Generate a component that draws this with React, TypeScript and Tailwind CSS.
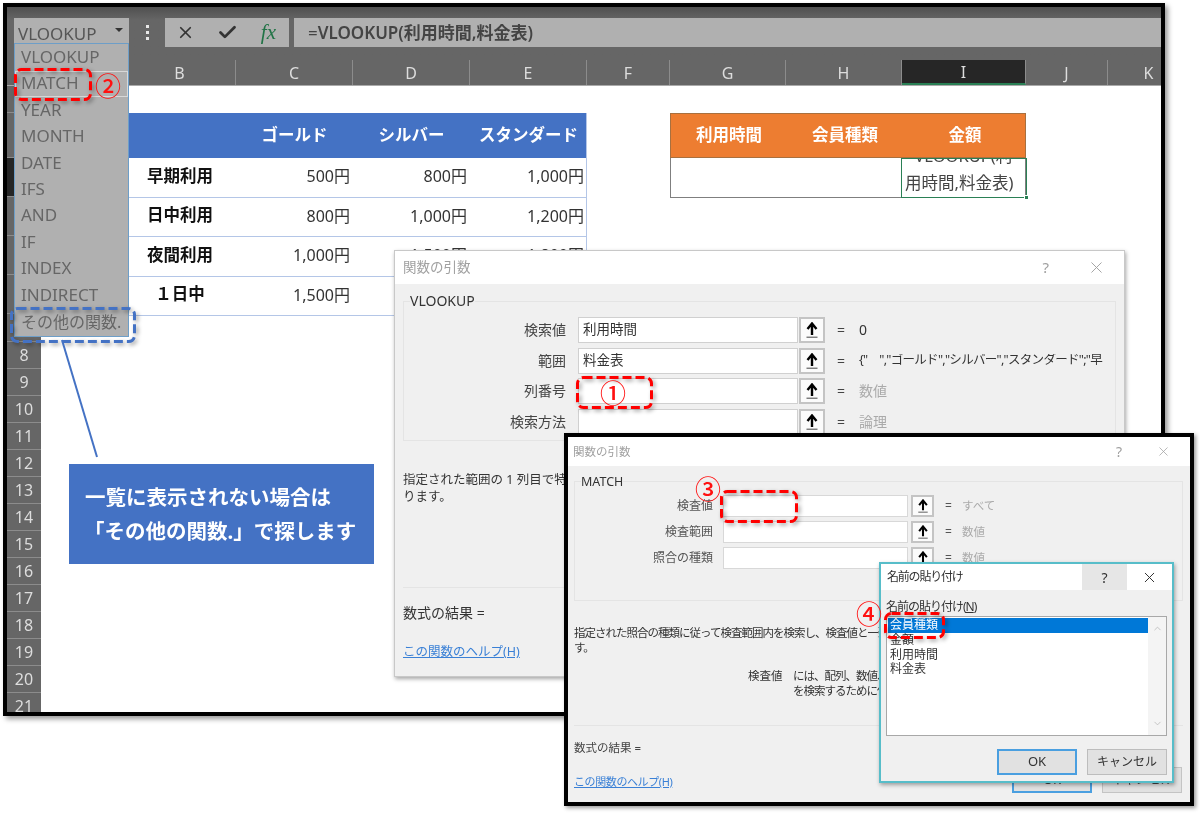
import { Check, ChevronDown, ChevronUp, X } from 'lucide-react'

const colHeaders = [
  { name: 'A', width: 'w-[83px]', active: false },
  { name: 'B', width: 'w-[112px]', active: false },
  { name: 'C', width: 'w-[117px]', active: false },
  { name: 'D', width: 'w-[117px]', active: false },
  { name: 'E', width: 'w-[117px]', active: false },
  { name: 'F', width: 'w-[83px]', active: false },
  { name: 'G', width: 'w-[116px]', active: false },
  { name: 'H', width: 'w-[116px]', active: false },
  { name: 'I', width: 'w-[124px]', active: true },
  { name: 'J', width: 'w-[82px]', active: false },
  { name: 'K', width: 'w-[82px]', active: false },
]

const rowHeaders = [
  { name: '1', height: 'h-[27px]', active: false },
  { name: '2', height: 'h-[45px]', active: false },
  { name: '3', height: 'h-[39px]', active: true },
  { name: '4', height: 'h-[39px]', active: false },
  { name: '5', height: 'h-[39px]', active: false },
  { name: '6', height: 'h-[39px]', active: false },
  { name: '7', height: 'h-[28px]', active: false },
  ...['8', '9', '10', '11', '12', '13', '14', '15', '16', '17', '18', '19', '20', '21'].map(name => ({ name, height: 'h-[27px]', active: false })),
]

const priceRows = [
  ['早期利用', '500円', '800円', '1,000円'],
  ['日中利用', '800円', '1,000円', '1,200円'],
  ['夜間利用', '1,000円', '1,500円', '1,800円'],
  ['１日中', '1,500円', '1,800円', '2,000円'],
]

const functionNames = ['VLOOKUP', 'MATCH', 'YEAR', 'MONTH', 'DATE', 'IFS', 'AND', 'IF', 'INDEX', 'INDIRECT']

const RefButton = ({ small }: { small?: boolean }) => (
  <div className={`${small ? 'w-[23px] h-[22px] ml-[3px]' : 'w-[26px] h-[26px] ml-[1px]'} bg-[#fbfbfb] border-2 border-[#c4c4c4] flex items-center justify-center shrink-0`}>
    <svg viewBox="0 0 14 16" className={small ? 'w-[12px] h-[14px]' : 'w-[14px] h-[16px]'}>
      <path d="M7 13V2M2.5 7 7 1.5 11.5 7" fill="none" stroke="#000" strokeWidth="2.4" />
      <path d="M1.5 15.2h11" stroke="#555" strokeWidth="1.1" />
    </svg>
  </div>
)

const ArgRow = ({ label, value, result, muted, long }: { label: string, value?: string, result: string, muted?: boolean, long?: boolean }) => (
  <div className="flex items-center h-[26px] text-[14px] leading-none">
    <div className="w-[162px] text-right text-[#444] shrink-0">{label}</div>
    <div className="ml-[12px] w-[220px] h-[26px] bg-white border border-[#d0d0d0] flex items-center px-[4px] text-[13.5px] text-[#333] shrink-0">{value}</div>
    <RefButton />
    <div className="ml-[12px] w-[22px] text-[#444] shrink-0">=</div>
    <div className={`whitespace-nowrap overflow-hidden w-[246px] ${muted ? 'text-[#aaa]' : 'text-[#333]'} ${long ? 'text-[12.5px] tracking-[-0.7px]' : ''}`}>{result}</div>
  </div>
)

const MatchRow = ({ label, result }: { label: string, result: string }) => (
  <div className="flex items-center h-[22px] text-[12px] leading-none">
    <div className="w-[138px] text-right text-[#555] shrink-0">{label}</div>
    <div className="ml-[10px] w-[185px] h-[22px] bg-white border border-[#d8d8d8] shrink-0" />
    <RefButton small />
    <div className="ml-[11px] w-[17px] text-[#555] shrink-0">=</div>
    <div className="text-[#aaa] text-[11.5px]">{result}</div>
  </div>
)

const Dashed = ({ className, w, h, color }: { className: string, w: number, h: number, color: string }) => (
  <svg width={w} height={h} className={`absolute drop-shadow-[2px_2px_2px_rgba(0,0,0,0.4)] ${className}`}>
    <rect x="1.5" y="1.5" width={w - 3} height={h - 3} rx="6" fill="none" stroke={color} strokeWidth="3" strokeDasharray="9 4" />
  </svg>
)

const Circled = ({ children, className }: { children: string, className: string }) => (
  <div className={`absolute text-[26px] leading-none font-medium text-[#ff1010] ${className}`}>{children}</div>
)

const App = () => {
  return (
    <div className="relative w-[1200px] h-[813px] bg-white overflow-hidden font-['Noto_Sans','Noto_Sans_CJK_JP',sans-serif] blur-[0.3px]">

      {/* excel window */}
      <div className="ml-[3px] mt-[3px] w-[1162px] h-[713px] border-4 border-black overflow-hidden flex flex-col bg-white shadow-[3px_3px_5px_rgba(0,0,0,0.4)]">
        <div className="h-[53px] bg-[#666] flex items-start pt-[11px] pl-[7px] shrink-0 bg-gradient-to-b from-[#505050] to-[#666] to-[25%]">
          <div className="w-[115px] h-[25px] bg-[#b0b0b0] flex items-center justify-between pl-[4px] pr-[6px] text-[17px] text-[#555] shrink-0">
            <span className="mt-[6px]">VLOOKUP</span>
            <div className="w-0 h-0 border-x-[4px] border-x-transparent border-t-[4px] border-t-[#333] mb-[2px]" />
          </div>
          <div className="w-[36px] flex flex-col items-center gap-[3px] pt-[7px] shrink-0">
            <div className="w-[3px] h-[3px] bg-[#e8e8e8]" />
            <div className="w-[3px] h-[3px] bg-[#e8e8e8]" />
            <div className="w-[3px] h-[3px] bg-[#e8e8e8]" />
          </div>
          <div className="w-[124px] h-[29px] bg-[#b0b0b0] flex items-center justify-between pl-[11px] pr-[13px] shrink-0">
            <X size={19} strokeWidth={2.2} className="text-[#333]" />
            <Check size={21} strokeWidth={3.2} className="text-[#333]" />
            <span className="font-['Liberation_Serif',serif] italic text-[21px] text-[#217346]">fx</span>
          </div>
          <div className="ml-[5px] flex-1 h-[29px] bg-[#b0b0b0] flex items-center pl-[14px] text-[17px] text-[#444] font-semibold">
            <span className="font-normal">=</span>VLOOKUP(利用時間,料金表)
          </div>
        </div>

        <div className="h-[26px] bg-[#666] flex pl-[34px] border-b border-[#aaa] shrink-0">
          {colHeaders.map(col => (
            <div key={col.name} className={`${col.width} shrink-0 flex items-center justify-center text-[16px] text-[#ddd] border-r border-[#8c8c8c] ${col.active ? 'bg-[#262626] border-b-2 border-b-[#2a8055]' : ''}`}>{col.name}</div>
          ))}
        </div>

        <div className="flex-1 flex min-h-0">
          <div className="w-[34px] bg-[#666] shrink-0">
            {rowHeaders.map(row => (
              <div key={row.name} className={`${row.height} flex items-center justify-center text-[16px] text-[#ddd] border-b border-[#8c8c8c] ${row.active ? 'bg-[#262626]' : ''}`}>{row.name}</div>
            ))}
          </div>

          <div className="flex-1 flex items-start pt-[27px] pl-[83px]">
            <div className="w-[463px] shrink-0 border-r border-[#b4c6e7]">
              <div className="grid grid-cols-[112px_117px_117px_117px] h-[45px] bg-[#4472c4] text-white font-bold text-[16.5px] items-center text-center">
                <div />
                <div>ゴールド</div>
                <div>シルバー</div>
                <div>スタンダード</div>
              </div>
              {priceRows.map(row => (
                <div key={row[0]} className="grid grid-cols-[112px_117px_117px_117px] h-[39.5px] pb-[2px] border-b border-[#b4c6e7] items-center text-[16px] text-[#333]">
                  <div className="text-center font-bold text-[16.5px] text-[#111]">{row[0]}</div>
                  <div className="text-right pr-[3px]">{row[1]}</div>
                  <div className="text-right pr-[3px]">{row[2]}</div>
                  <div className="text-right pr-[3px]">{row[3]}</div>
                </div>
              ))}
            </div>

            <div className="ml-[83px] w-[356px] shrink-0">
              <div className="grid grid-cols-[116px_116px_124px] h-[45px] bg-[#ed7d31] border border-[#a8703f] text-white font-bold text-[16.5px] items-center text-center">
                <div>利用時間</div>
                <div>会員種類</div>
                <div>金額</div>
              </div>
              <div className="flex h-[40px] border-x border-b border-[#7f7f7f] bg-white">
                <div className="w-[230px]" />
                <div className="relative flex-1 -mr-[2px] -mb-[1px] border-[1.5px] border-[#2a8055] overflow-hidden flex flex-col justify-end text-[16.5px] leading-[27px] text-[#444] px-[3px] pb-[1px]">
                  <div className="whitespace-nowrap">=VLOOKUP(利</div>
                  <div className="whitespace-nowrap">用時間,料金表)</div>
                </div>
              </div>
            </div>
          </div>
        </div>
      </div>
      <div className="absolute left-[1024px] top-[195px] w-[4px] h-[4px] bg-[#2a8055] border-l border-t border-white" />

      {/* function dropdown */}
      <div className="absolute left-[14px] top-[43px] w-[115px] h-[294px] bg-[#b0b0b0] border border-[#6d9ec8] pl-[6px] text-[17px] leading-[26.4px] text-[#666]">
        {functionNames.map(name => (
          <div key={name} className="h-[26.4px] whitespace-nowrap">{name}</div>
        ))}
        <div className="mt-[1px] h-[26.4px] whitespace-nowrap text-[16px]">その他の関数.</div>
      </div>
      <div className="absolute left-[15px] top-[71px] w-[113px] h-[26px] border border-[#d8d8d8]" />

      {/* VLOOKUP dialog */}
      <div className="absolute left-[394px] top-[250px] w-[731px] h-[427px] bg-[#f0f0f0] border border-[#c8c8c8] shadow-[1px_2px_4px_rgba(0,0,0,0.35)] flex flex-col">
        <div className="h-[33px] bg-white flex items-center justify-between pl-[8px] pr-[18px] shrink-0 text-[13.5px] text-[#a0a0a0]">
          <span>関数の引数</span>
          <div className="flex items-center gap-[38px]">
            <span className="text-[15px]">?</span>
            <X size={19} strokeWidth={1.2} />
          </div>
        </div>
        <div className="px-[8px] pt-[9px] flex-1 flex flex-col">
          <fieldset className="w-[713px] h-[148px] border border-[#e4e4e4] px-[6px] shrink-0">
            <legend className="text-[14px] leading-[16px] text-[#333]">VLOOKUP</legend>
            <div className="flex flex-col gap-[4.5px] pt-[8px] -ml-[6px]">
              <ArgRow label="検索値" value="利用時間" result="0" />
              <ArgRow label="範囲" value="料金表" result={'{"　","ゴールド","シルバー","スタンダード";"早'} long />
              <ArgRow label="列番号" result="数値" muted />
              <ArgRow label="検索方法" result="論理" muted />
            </div>
          </fieldset>
          <div className="mt-[30px] text-[12.5px] leading-[17px] text-[#333] whitespace-nowrap overflow-hidden">
            指定された範囲の 1 列目で特定の値を検索します。
            <br />
            ります。
          </div>
          <div className="mt-[82px] border-t border-[#e4e4e4] pt-[15px] text-[14px] leading-[20px] text-[#333]">数式の結果 =</div>
          <div className="mt-[19px] text-[12.5px] leading-[20px] text-[#3a80d6] underline">この関数のヘルプ(H)</div>
        </div>
      </div>

      {/* MATCH dialog */}
      <div className="absolute left-[564px] top-[433px] w-[630px] h-[373px] bg-[#f0f0f0] border-4 border-black shadow-[2px_2px_4px_rgba(0,0,0,0.4)] flex flex-col">
        <div className="h-[29px] bg-white flex items-center justify-between pl-[5px] pr-[19px] shrink-0 text-[11.5px] text-[#a0a0a0]">
          <span>関数の引数</span>
          <div className="flex items-center gap-[34px]">
            <span className="text-[14px]">?</span>
            <X size={15} strokeWidth={1.2} />
          </div>
        </div>
        <div className="pl-[6px] pr-[7px] pt-[8px] flex-1 flex flex-col text-[#444] min-h-0">
          <fieldset className="h-[127px] border border-[#e4e4e4] px-[6px] shrink-0">
            <legend className="text-[12.5px] leading-[15px] text-[#333]">MATCH</legend>
            <div className="flex flex-col gap-[4px] pt-[6px] -ml-[6px]">
              <MatchRow label="検査値" result="すべて" />
              <MatchRow label="検査範囲" result="数値" />
              <MatchRow label="照合の種類" result="数値" />
            </div>
          </fieldset>
          <div className="mt-[24px] text-[11.5px] tracking-[-1px] leading-[15px] text-[#333] whitespace-nowrap">
            指定された照合の種類に従って検査範囲内を検索し、検査値と一致する要素の相対的な位置を返しま
            <br />
            す。
          </div>
          <div className="mt-[13px] ml-[174px] flex text-[11.5px] leading-[15px] text-[#333] whitespace-nowrap">
            <div className="w-[45px]">検査値</div>
            <div className="tracking-[-1px]">
              には、配列、数値、文字列、論理値、またはこれらの値への参照で、目的の項目
              <br />
              を検索するために使用します。
            </div>
          </div>
          <div className="mt-[27px] border-t border-[#e4e4e4] pt-[13px] text-[11.5px] leading-[17px]">数式の結果 =</div>
          <div className="mt-[17px] flex items-start justify-between">
            <div className="text-[11px] tracking-[-0.4px] leading-[17px] text-[#3a80d6] underline">この関数のヘルプ(H)</div>
            <div className="flex gap-[10px] -mt-[6px] mr-[1px]">
              <div className="w-[80px] h-[26px] bg-[#e1e1e1] border-2 border-[#4a9fe0] flex items-center justify-center text-[13px]">OK</div>
              <div className="w-[80px] h-[26px] bg-[#e1e1e1] border border-[#c4c4c4] flex items-center justify-center text-[12.5px]">キャンセル</div>
            </div>
          </div>
        </div>
      </div>

      {/* name paste dialog */}
      <div className="absolute left-[879px] top-[562px] w-[295px] h-[221px] bg-[#f0f0f0] border-2 border-[#57bdc9] shadow-[1px_2px_4px_rgba(0,0,0,0.35)] flex flex-col">
        <div className="h-[26px] bg-white flex items-stretch justify-between pl-[6px] shrink-0 text-[12px] tracking-[-1.2px] text-[#333]">
          <span className="self-center">名前の貼り付け</span>
          <div className="flex items-stretch">
            <div className="w-[45px] bg-[#e6e6e6] flex items-center justify-center text-[14px] tracking-normal">?</div>
            <div className="w-[45px] flex items-center justify-center"><X size={17} strokeWidth={1.4} /></div>
          </div>
        </div>
        <div className="px-[5px] flex-1 flex flex-col">
          <div className="mt-[8px] text-[12px] tracking-[-1px] leading-[17px] text-[#333]">名前の貼り付け(<span className="underline">N</span>)</div>
          <div className="mt-[1px] w-[281px] h-[120px] bg-white border border-[#a8a8a8] flex text-[12px] leading-[14.7px] text-[#333]">
            <div className="flex-1 pt-[1px] pl-[1px]">
              <div className="bg-[#0078d7] text-white pl-[2px] h-[15px]">会員種類</div>
              <div className="pl-[2px]">金額</div>
              <div className="pl-[2px]">利用時間</div>
              <div className="pl-[2px]">料金表</div>
            </div>
            <div className="w-[18px] bg-[#f4f4f4] flex flex-col justify-between items-center py-[6px] text-[#b0b0b0]">
              <ChevronUp size={11} strokeWidth={1.5} />
              <ChevronDown size={11} strokeWidth={1.5} />
            </div>
          </div>
          <div className="mt-[13px] flex justify-end gap-[10px]">
            <div className="w-[80px] h-[26px] bg-[#e1e1e1] border-2 border-[#4a9fe0] flex items-center justify-center text-[13px] text-[#333]">OK</div>
            <div className="w-[80px] h-[26px] bg-[#e1e1e1] border border-[#bdbdbd] flex items-center justify-center text-[12px] text-[#333]">キャンセル</div>
          </div>
        </div>
      </div>

      {/* annotations */}
      <Dashed className="left-[14px] top-[68px]" w={78} h={33} color="#ff0000" />
      <Circled className="left-[95px] top-[73px]">②</Circled>
      <Dashed className="left-[576px] top-[376px]" w={77} h={33} color="#ff0000" />
      <Circled className="left-[600px] top-[380px]">①</Circled>
      <Dashed className="left-[720px] top-[490px]" w={78} h={33} color="#ff0000" />
      <Circled className="left-[695px] top-[476px]">③</Circled>
      <Dashed className="left-[884px] top-[612px]" w={61} h={27} color="#ff0000" />
      <Circled className="left-[856px] top-[601px]">④</Circled>
      <Dashed className="left-[10px] top-[307px]" w={126} h={36} color="#4472c4" />

      <svg className="absolute left-0 top-0 w-[120px] h-[470px]" viewBox="0 0 120 470">
        <line x1="62" y1="340" x2="97" y2="457" stroke="#4472c4" strokeWidth="2" />
      </svg>

      <div className="absolute left-[69px] top-[464px] w-[305px] h-[100px] bg-[#4472c4] text-white font-bold text-[20.5px] leading-[34px] pl-[16px] pt-[16px] whitespace-nowrap">
        一覧に表示されない場合は
        <br />
        <span className="-ml-[1px]">「その他の関数.」で探します</span>
      </div>
    </div>
  )
}

export default App
